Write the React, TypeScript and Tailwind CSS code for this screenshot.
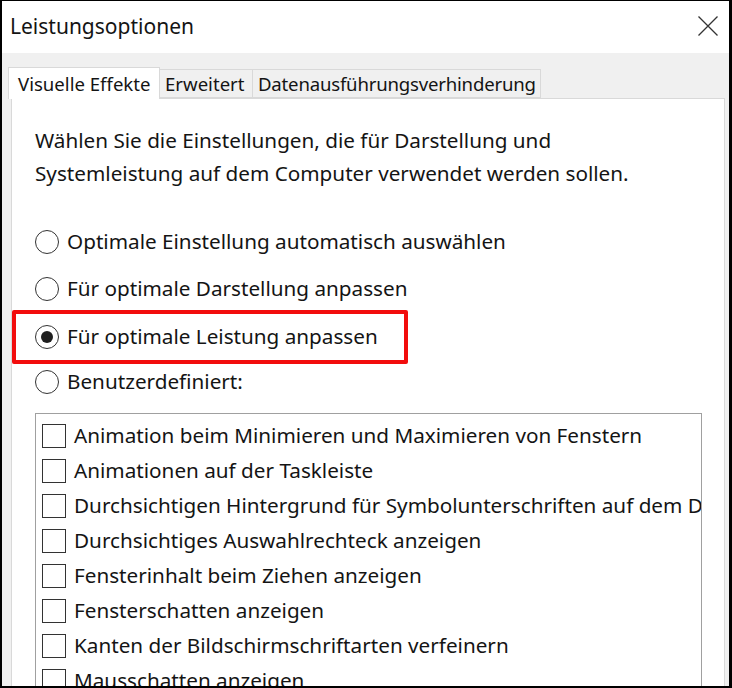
const radios = [
  { label: 'Optimale Einstellung automatisch auswählen', checked: false, h: 'h-[48px]' },
  { label: 'Für optimale Darstellung anpassen', checked: false, h: 'h-[46px]' },
  { label: 'Für optimale Leistung anpassen', checked: true, h: '' },
  { label: 'Benutzerdefiniert:', checked: false, h: 'h-[36px]' },
]

const effects = [
  'Animation beim Minimieren und Maximieren von Fenstern',
  'Animationen auf der Taskleiste',
  'Durchsichtigen Hintergrund für Symbolunterschriften auf dem Desktop',
  'Durchsichtiges Auswahlrechteck anzeigen',
  'Fensterinhalt beim Ziehen anzeigen',
  'Fensterschatten anzeigen',
  'Kanten der Bildschirmschriftarten verfeinern',
  'Mausschatten anzeigen',
]

function Radio({ checked }: { checked: boolean }) {
  return (
    <span className="flex h-[24px] w-[24px] shrink-0 items-center justify-center rounded-full border border-[#333]">
      {checked && <span className="h-[12px] w-[12px] rounded-full bg-[#1f1f1f]" />}
    </span>
  )
}

export default function App() {
  return (
    <div
      className="h-[688px] w-[732px] overflow-hidden border-b-2 border-l-2 border-r-[3px] border-t border-black bg-white text-[#141414]"
      style={{ fontFamily: '"Noto Sans", "Open Sans", sans-serif' }}
    >
      <div className="flex h-[52px] items-center justify-between bg-white pl-[8px] pr-[11px]">
        <span className="text-[21px]">Leistungsoptionen</span>
        <svg width="20" height="20" viewBox="0 0 20 20" className="mb-[2px]">
          <path d="M0.5 0.5 L19.5 19.5 M19.5 0.5 L0.5 19.5" stroke="#333" strokeWidth="1.3" fill="none" />
        </svg>
      </div>

      <div className="h-full bg-[#f0f0f0] pl-[6px] pr-[4px] pt-[14px]">
        <div className="flex items-end text-[18.6px]">
          <div className="relative z-10 -mb-px flex h-[32px] w-[152px] items-center border border-b-0 border-[#d9d9d9] bg-white pl-[9px]">
            Visuelle Effekte
          </div>
          <div className="flex h-[29px] w-[93px] items-center border-y border-r border-[#d9d9d9] bg-[#f0f0f0] pl-[5px]">
            Erweitert
          </div>
          <div className="flex h-[29px] w-[288px] items-center overflow-hidden whitespace-nowrap border-y border-r border-[#d9d9d9] bg-[#f0f0f0] pl-[5px] tracking-[-0.2px]">
            Datenausführungsverhinderung
          </div>
        </div>

        <div className="ml-[3px] h-full border border-[#d9d9d9] bg-white pl-[23px] pr-[22px] pt-[25px] text-[20.7px]">
          <p className="leading-[33px]">
            Wählen Sie die Einstellungen, die für Darstellung und
            <br />
            Systemleistung auf dem Computer verwendet werden sollen.
          </p>

          <div className="mt-[28px] flex flex-col">
            {radios.map((r) =>
              r.checked ? (
                <div
                  key={r.label}
                  className="-ml-[23px] -mt-[2px] flex h-[54px] w-[396px] items-center gap-[8px] rounded-[2px] border-4 border-[#f20d0d] pl-[19px]"
                >
                  <Radio checked />
                  <span>{r.label}</span>
                </div>
              ) : (
                <div key={r.label} className={`flex items-center gap-[8px] ${r.h}`}>
                  <Radio checked={false} />
                  <span>{r.label}</span>
                </div>
              ),
            )}
          </div>

          <div className="mt-[13px] h-[400px] overflow-hidden border border-[#a0a0a0] pl-[6px] pt-[4px]">
            {effects.map((e) => (
              <div key={e} className="flex h-[35px] items-center gap-[8px] whitespace-nowrap">
                <span className="h-[24px] w-[24px] shrink-0 border border-[#333]" />
                <span>{e}</span>
              </div>
            ))}
          </div>
        </div>
      </div>
    </div>
  )
}
